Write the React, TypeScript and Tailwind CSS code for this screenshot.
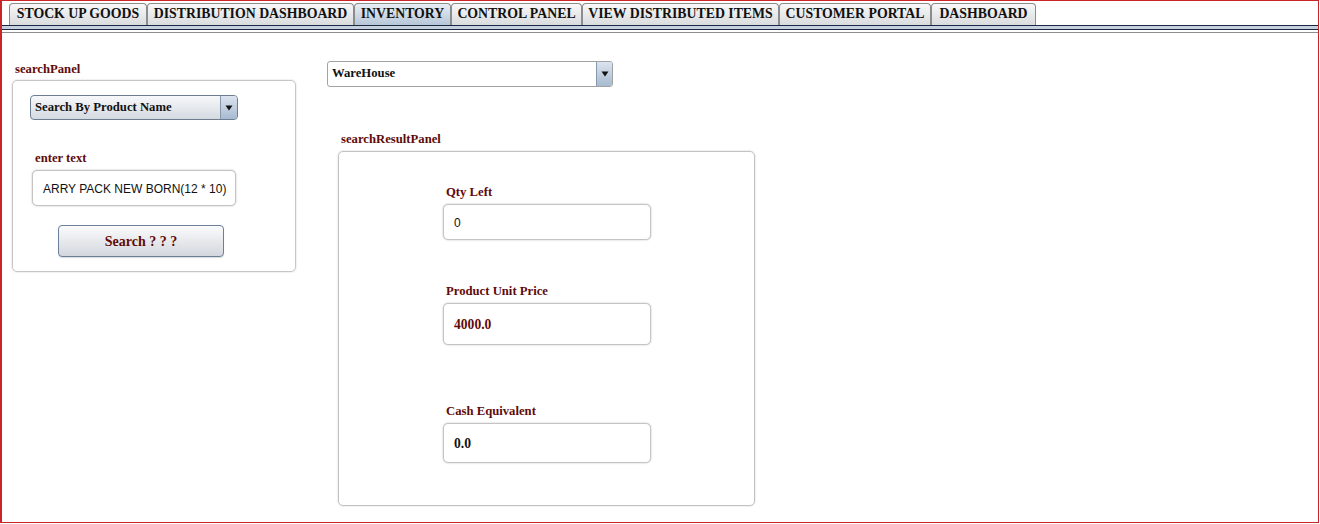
const tabs = [
  { name: "STOCK UP GOODS", w: "w-[138px]" },
  { name: "DISTRIBUTION DASHBOARD", w: "w-[207px]" },
  { name: "INVENTORY", w: "w-[97px]", active: true },
  { name: "CONTROL PANEL", w: "w-[131px]" },
  { name: "VIEW DISTRIBUTED ITEMS", w: "w-[197px]" },
  { name: "CUSTOMER PORTAL", w: "w-[152px]" },
  { name: "DASHBOARD", w: "w-[105px]" },
];

const serif = "font-['Liberation_Serif','Times_New_Roman',serif]";

function Arrow() {
  return (
    <svg width="8" height="6" viewBox="0 0 8 6">
      <path d="M0.5 0.5 L7.5 0.5 L4 5.5 Z" fill="#111" />
    </svg>
  );
}

function Label({ text, className = "" }: { text: string; className?: string }) {
  return (
    <div
      className={`${serif} h-[14px] text-[12.7px] leading-[14px] font-bold text-[#5e0b0b] whitespace-nowrap ${className}`}
    >
      {text}
    </div>
  );
}

function Field({
  label,
  value,
  h,
  valueClass,
  className = "",
}: {
  label: string;
  value: string;
  h: string;
  valueClass: string;
  className?: string;
}) {
  return (
    <div className={className}>
      <Label text={label} className="ml-[3px]" />
      <div
        className={`mt-[5px] w-[208px] ${h} flex items-center pl-[10px] pt-[2px] rounded-[5px] border border-[#c4c4c4] bg-white shadow-[0_0_2px_rgba(0,0,0,0.25)]`}
      >
        <span className={valueClass}>{value}</span>
      </div>
    </div>
  );
}

export default function App() {
  return (
    <div className="w-[1319px] h-[523px] bg-white border-t border-r border-b border-l-2 border-[#c9262c] overflow-hidden">
      {/* tab strip */}
      <div className="flex pl-[7px] pt-[2px]">
        {tabs.map((t) => (
          <div
            key={t.name}
            className={`${t.w} h-[22px] flex items-center justify-center rounded-t-[4px] border-t border-l border-r border-[#8c8c8c] ${
              t.active
                ? "bg-gradient-to-b from-[#e8eef4] to-[#b6c6d8]"
                : "bg-gradient-to-b from-[#f8f8f8] to-[#d9dbde]"
            }`}
          >
            <span className={`${serif} text-[13.8px] font-bold text-[#111] whitespace-nowrap`}>
              {t.name}
            </span>
          </div>
        ))}
      </div>
      <div className="h-px bg-[#1c2742]" />
      <div className="h-[3px] bg-[#c6d1e0]" />
      <div className="h-px bg-[#1c2742]" />
      <div className="h-[2px]" />
      <div className="h-px bg-[#8e8e8e]" />

      {/* content */}
      <div className="flex items-start pl-[10px]">
        {/* search panel */}
        <div className="w-[284px] mt-[29px]">
          <Label text="searchPanel" className="ml-[3px]" />
          <div className="mt-[4px] h-[192px] rounded-[5px] border border-[#c6c6c6] shadow-[0_0_2px_rgba(0,0,0,0.2)] pt-[14px] pl-[17px]">
            <div className="w-[208px] h-[25px] flex rounded-[4px] border border-[#6e7d90] bg-gradient-to-b from-[#f7f8fa] to-[#d5dae1] overflow-hidden">
              <div className={`${serif} flex-1 flex items-center pl-[4px] text-[12.7px] font-bold text-[#111]`}>
                Search By Product Name
              </div>
              <div className="w-[17px] flex items-center justify-center border-l border-[#8797ac] bg-gradient-to-b from-[#dbe4ef] to-[#a7bad0]">
                <Arrow />
              </div>
            </div>
            <Label text="enter text" className="mt-[31px] ml-[5px]" />
            <div className="mt-[5px] ml-[2px] w-[204px] h-[36px] flex items-center pl-[10px] pt-[1px] overflow-hidden rounded-[5px] border border-[#c4c4c4] bg-white shadow-[0_0_2px_rgba(0,0,0,0.25)]">
              <span className="font-['Liberation_Sans',Arial,sans-serif] text-[12px] text-[#111] whitespace-nowrap">
                ARRY PACK NEW BORN(12 * 10)
              </span>
            </div>
            <div className="mt-[19px] ml-[28px] w-[166px] h-[32px] flex items-center justify-center rounded-[4px] border border-[#6a7f9a] bg-gradient-to-b from-[#fbfbfc] to-[#d3d7dd] shadow-[0_1px_1px_rgba(0,0,0,0.15)]">
              <span className={`${serif} text-[14px] font-bold text-[#5e0b0b]`}>Search ? ? ?</span>
            </div>
          </div>
        </div>

        {/* warehouse + results */}
        <div className="ml-[31px] mt-[28px]">
          <div className="w-[286px] h-[26px] flex rounded-[3px] border border-[#a2a2a2] bg-white overflow-hidden">
            <div className={`${serif} flex-1 flex items-center pl-[4px] text-[12.7px] font-bold text-[#111]`}>
              WareHouse
            </div>
            <div className="w-[16px] flex items-center justify-center border-l border-[#8797ac] bg-gradient-to-b from-[#dbe4ef] to-[#a7bad0]">
              <Arrow />
            </div>
          </div>
          <Label text="searchResultPanel" className="mt-[45px] ml-[14px]" />
          <div className="mt-[5px] ml-[11px] w-[417px] h-[355px] rounded-[5px] border border-[#c2c2c2] shadow-[0_0_2px_rgba(0,0,0,0.2)] pl-[104px] pt-[33px]">
            <Field
              label="Qty Left"
              value="0"
              h="h-[36px]"
              valueClass="font-['Liberation_Sans',Arial,sans-serif] text-[12px] text-[#111]"
            />
            <Field
              label="Product Unit Price"
              value="4000.0"
              h="h-[42px]"
              className="mt-[44px]"
              valueClass={`${serif} text-[13.6px] font-bold text-[#5e0b0b]`}
            />
            <Field
              label="Cash Equivalent"
              value="0.0"
              h="h-[40px]"
              className="mt-[59px]"
              valueClass={`${serif} text-[13.6px] font-bold text-[#111]`}
            />
          </div>
        </div>
      </div>
    </div>
  );
}
